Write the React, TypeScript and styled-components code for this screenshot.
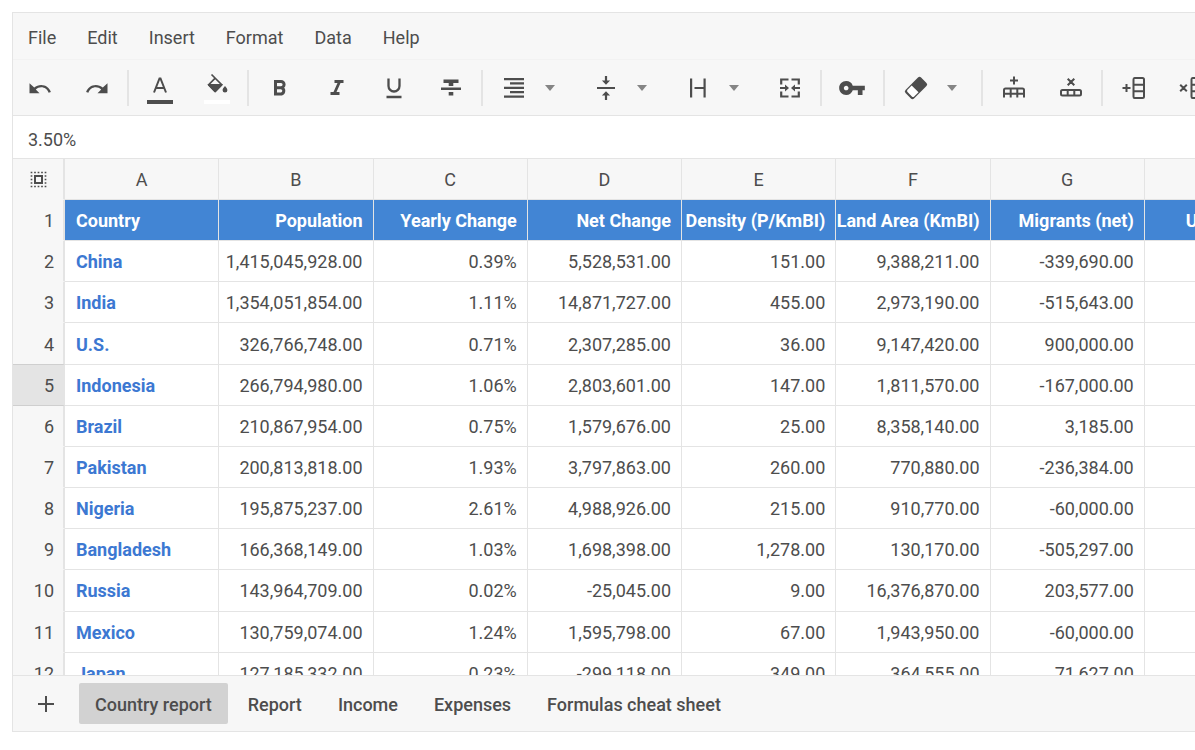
import React from "react";
import styled, { createGlobalStyle } from "styled-components";
import { MdVpnKey } from "react-icons/md";

const colors = {
  text: "#4d4d4d",
  panel: "#f7f7f7",
  line: "#e4e4e4",
  lineSoft: "#f2f2f2",
  active: "#d2d2d2",
  blue: "#4285d4",
  link: "#3c78d2",
};

const GlobalStyle = createGlobalStyle`
  * { box-sizing: border-box; }
  body {
    margin: 0;
    background: #fff;
    color: ${colors.text};
    font-family: Roboto, "Liberation Sans", sans-serif;
    font-size: 18px;
    line-height: 24px;
    overflow: hidden;
  }
  button, input { font: inherit; color: inherit; }
`;

const Page = styled.div`
  display: flex;
  height: 100vh;
  padding: 12px 0 18px 12px;
`;

const Spreadsheet = styled.main`
  flex: 1;
  min-width: 0;
  display: flex;
  flex-direction: column;
  border: 1px solid ${colors.line};
  border-right: 0;
  background: ${colors.panel};
`;

const MenuBar = styled.nav`
  flex: none;
  display: flex;
  gap: 1px;
  height: 47px;
  border-bottom: 1px solid ${colors.lineSoft};
`;

const MenuItem = styled.button`
  border: 0;
  background: none;
  padding: 4px 15px 0;
`;

const Toolbar = styled.div`
  flex: none;
  display: flex;
  align-items: center;
  gap: 4px;
  height: 56px;
  border-bottom: 1px solid ${colors.line};
  overflow: hidden;
`;

const ToolButton = styled.button<{ $menu?: boolean }>`
  flex: none;
  display: flex;
  align-items: center;
  gap: 16px;
  width: ${(p) => (p.$menu ? 88 : 53)}px;
  height: 42px;
  padding: 0 0 0 12px;
  border: 0;
  background: none;
`;

const Separator = styled.span`
  flex: none;
  width: 2px;
  height: 36px;
  background: ${colors.line};
`;

const Glyph = styled.svg`
  flex: none;
  display: block;
`;

const FormulaInput = styled.input`
  flex: none;
  display: block;
  width: 100%;
  height: 43px;
  padding: 4px 15px 0;
  border: 0;
  border-bottom: 1px solid ${colors.line};
  background: #fff;
  outline: 0;
`;

const SheetArea = styled.div`
  flex: 1;
  min-height: 0;
  overflow: hidden;
  background: #fff;
`;

const Sheet = styled.table`
  table-layout: fixed;
  width: 1286px;
  height: 535px;
  border-collapse: separate;
  border-spacing: 0;
`;

const IndexCol = styled.col`
  width: 52px;
`;

const ColumnHead = styled.th`
  height: 41px;
  padding: 2px 0 0;
  background: ${colors.panel};
  border-right: 1px solid ${colors.line};
  border-bottom: 1px solid ${colors.line};
  font-weight: 400;
`;

const Corner = styled(ColumnHead)`
  padding: 0;
  border-right-width: 2px;
  border-bottom-color: ${colors.panel};
`;

const SelectAll = styled.button`
  display: flex;
  align-items: center;
  width: 100%;
  height: 40px;
  padding: 0 0 0 17px;
  border: 0;
  background: none;
`;

const RowHead = styled.th<{ $selected: boolean; $beforeSelected: boolean }>`
  padding: 2px 9px 0 0;
  background: ${(p) => (p.$selected ? "#e4e4e4" : colors.panel)};
  border-right: 2px solid ${colors.line};
  border-bottom: 1px solid ${(p) => (p.$selected || p.$beforeSelected ? "#cfcfcf" : colors.panel)};
  font-weight: 400;
  text-align: right;
`;

const Cell = styled.td<{ $head: boolean; $name: boolean }>`
  padding: 2px 10px 0 11px;
  overflow: hidden;
  border-right: 1px solid ${colors.line};
  border-bottom: 1px solid ${colors.line};
  background: ${(p) => (p.$head ? colors.blue : "#fff")};
  color: ${(p) => (p.$head ? "#fff" : p.$name ? colors.link : colors.text)};
  font-weight: ${(p) => (p.$head || p.$name ? 700 : 400)};
`;

const CellText = styled.div<{ $end: boolean }>`
  display: flex;
  justify-content: ${(p) => (p.$end ? "flex-end" : "flex-start")};
  white-space: nowrap;
`;

const TabBar = styled.div`
  flex: none;
  display: flex;
  align-items: center;
  gap: 4px;
  height: 56px;
  padding-left: 12px;
  border-top: 1px solid ${colors.line};
`;

const AddSheet = styled.button`
  display: grid;
  place-items: center;
  width: 42px;
  height: 42px;
  margin-right: 8px;
  padding: 0;
  border: 0;
  background: none;
`;

const Tab = styled.button<{ $active: boolean }>`
  height: 41px;
  padding: 2px 16px 0;
  border: 0;
  border-radius: 2px;
  background: ${(p) => (p.$active ? colors.active : "transparent")};
  font-weight: 500;
  white-space: nowrap;
`;

const C = colors.text;

const icons: Record<string, React.ReactNode> = {
  undo: <path fill={C} d="M4.500 10.200v10h10l-3.700-3.700c1.700-1.500 3.400-2.200 5.400-2.200 3.500 0 6.300 2.200 7.400 5.400l2.300-.8c-1.400-4.200-5.200-7-9.700-7-2.700 0-5 .9-7 2.700z" />,
  redo: <path fill={C} d="M25.500 10.200v10h-10l3.700-3.700c-1.700-1.500-3.400-2.200-5.400-2.200-3.500 0-6.300 2.200-7.400 5.400l-2.300-.8c1.400-4.200 5.200-7 9.700-7 2.700 0 5 .9 7 2.700z" />,
  color: (
    <>
      <path fill="none" stroke={C} strokeWidth="2" d="M9 19.500 14.500 5.500h1L21 19.500M11 15h8" />
      <path fill={C} d="M2 27h26v4H2z" />
    </>
  ),
  fill: (
    <>
      <path fill="none" stroke={C} strokeWidth="1.700" d="M9.500 1.500 19.700 11.700l-6.500 6.500L6.700 11.700l6.500-6.500" />
      <path fill={C} d="M5.700 11h15l-.6 1.500-6 6.200q-1 1-2 0l-6-6.200zM23 13s2.400 2.500 2.400 4.200a2.400 2.400 0 0 1-4.800 0c0-1.700 2.400-4.200 2.400-4.200z" />
      <path fill="#fff" d="M2 27h26v4H2z" />
    </>
  ),
  bold: <path fill="none" stroke={C} strokeWidth="3" d="M10.500 8.500H16a3 3 0 0 1 0 6.200h-5.500zM10.500 14.700h6a3.300 3.300 0 0 1 0 6.300h-6z" />,
  italic: <path fill={C} d="M12.500 7h9v3h-3l-4 9h3v3h-9v-3h3l4-9h-3z" />,
  underline: <path fill="none" stroke={C} strokeWidth="2.300" d="M9.500 5.500v7.500a5.500 5.500 0 0 0 11 0V5.500M7.500 24h15" />,
  strike: <path fill={C} d="M7.500 6.500h15V10h-5.200v3h-4.600v-3H7.500zM5 14.500h20V17H5zM12.700 19h4.600v3.500h-4.600z" />,
  align: <path fill={C} d="M5 5h20v2.300H5zM11 9.300h14v2.300H11zM5 13.700h20V16H5zM11 18h14v2.300H11zM5 22.500h20v2.300H5z" />,
  middle: <path fill={C} d="M6 14h18v2H6zM13.900 3h2.200v4.500h3L15 11.700l-4.100-4.200h3zM13.900 27h2.200v-4.500h3L15 18.300l-4.100 4.200h3z" />,
  clip: <path fill={C} d="M7 5.500h2.200v19H7zM20.500 5.500h2.200v19h-2.200zM11.500 14h9v2h-9z" />,
  merge: (
    <>
      <path fill="none" stroke={C} strokeWidth="2.200" d="M6.200 11.500v-5h7.300M16.500 6.500h7.300v5M6.200 18.500v5h7.300M16.500 23.500h7.300v-5" />
      <path fill={C} d="M5 14h5v-2.500l4 3.500-4 3.500V16H5zM25 14h-5v-2.500L16 15l4 3.500V16h5z" />
    </>
  ),
  eraser: (
    <>
      <rect x="9" y="4" width="12" height="22" rx="2.200" transform="rotate(45 15 15)" fill={C} />
      <path fill="#fff" d="m10.700 12.500 6.800 6.800-4.300 4.200q-1.200 1-2.300 0l-4.400-4.400q-1-1.200 0-2.400z" />
    </>
  ),
  addRow: <path fill="none" stroke={C} strokeWidth="2" d="M15 3.500v8M11 7.500h8M5 24.500V17q0-1.500 1.500-1.500h17q1.500 0 1.500 1.500v7.500M11.700 15.500v9M18.300 15.500v9M5 20.700h20" />,
  deleteRow: <path fill="none" stroke={C} strokeWidth="2" d="m11.700 5.700 6.600 6.600M18.300 5.700l-6.600 6.600M6.500 17h17q1.500 0 1.500 1.500v2.500q0 1.500-1.500 1.500h-17Q5 22.500 5 21v-2.500Q5 17 6.500 17zM11.700 17v5.500M18.300 17v5.500" />,
  addColumn: <path fill="none" stroke={C} strokeWidth="2" d="M3.500 15h8M7.500 11v8M15.500 5h8q1.500 0 1.500 1.500v17q0 1.500-1.500 1.500h-8q-1 0-1-1.500v-17q0-1.500 1-1.500zM14.500 11.700H25M14.500 18.300H25" />,
  deleteColumn: <path fill="none" stroke={C} strokeWidth="2" d="m4.200 11.700 6.600 6.600M10.800 11.700l-6.600 6.600M16.500 5h8q1.500 0 1.500 1.500v17q0 1.500-1.500 1.500h-8q-1 0-1-1.500v-17q0-1.500 1-1.500zM15.500 11.700H26M15.500 18.300H26" />,
};

type Tool = { id: string; label: string; menu?: boolean };

const toolGroups: Tool[][] = [
  [{ id: "undo", label: "Undo" }, { id: "redo", label: "Redo" }],
  [{ id: "color", label: "Text color" }, { id: "fill", label: "Background color" }],
  [
    { id: "bold", label: "Bold" },
    { id: "italic", label: "Italic" },
    { id: "underline", label: "Underline" },
    { id: "strike", label: "Strikethrough" },
  ],
  [
    { id: "align", label: "Horizontal align", menu: true },
    { id: "middle", label: "Vertical align", menu: true },
    { id: "clip", label: "Multiline", menu: true },
    { id: "merge", label: "Merge" },
  ],
  [{ id: "key", label: "Lock cell" }],
  [{ id: "eraser", label: "Clear", menu: true }],
  [{ id: "addRow", label: "Add row" }, { id: "deleteRow", label: "Remove row" }],
  [{ id: "addColumn", label: "Add column" }, { id: "deleteColumn", label: "Remove column" }],
];

const menuItems = ["File", "Edit", "Insert", "Format", "Data", "Help"];
const tabs = ["Country report", "Report", "Income", "Expenses", "Formulas cheat sheet"];
const columns = ["A", "B", "C", "D", "E", "F", "G", "H"];
const rows = [
  ["Country", "Population", "Yearly Change", "Net Change", "Density (P/KmBI)", "Land Area (KmBI)", "Migrants (net)", "Urban Pop %"],
  ["China", "1,415,045,928.00", "0.39%", "5,528,531.00", "151.00", "9,388,211.00", "-339,690.00", ""],
  ["India", "1,354,051,854.00", "1.11%", "14,871,727.00", "455.00", "2,973,190.00", "-515,643.00", ""],
  ["U.S.", "326,766,748.00", "0.71%", "2,307,285.00", "36.00", "9,147,420.00", "900,000.00", ""],
  ["Indonesia", "266,794,980.00", "1.06%", "2,803,601.00", "147.00", "1,811,570.00", "-167,000.00", ""],
  ["Brazil", "210,867,954.00", "0.75%", "1,579,676.00", "25.00", "8,358,140.00", "3,185.00", ""],
  ["Pakistan", "200,813,818.00", "1.93%", "3,797,863.00", "260.00", "770,880.00", "-236,384.00", ""],
  ["Nigeria", "195,875,237.00", "2.61%", "4,988,926.00", "215.00", "910,770.00", "-60,000.00", ""],
  ["Bangladesh", "166,368,149.00", "1.03%", "1,698,398.00", "1,278.00", "130,170.00", "-505,297.00", ""],
  ["Russia", "143,964,709.00", "0.02%", "-25,045.00", "9.00", "16,376,870.00", "203,577.00", ""],
  ["Mexico", "130,759,074.00", "1.24%", "1,595,798.00", "67.00", "1,943,950.00", "-60,000.00", ""],
  ["Japan", "127,185,332.00", "0.23%", "-299,118.00", "349.00", "364,555.00", "71,627.00", ""],
];

const selectedRow = 5;

function ToolIcon({ id }: { id: string }) {
  if (id === "key") return <MdVpnKey size={28} color={C} />;
  return (
    <Glyph width="30" height="34" viewBox="0 -2 30 34" aria-hidden="true">
      {icons[id]}
    </Glyph>
  );
}

export default function App() {
  return (
    <Page>
      <GlobalStyle />
      <Spreadsheet>
        <MenuBar>
          {menuItems.map((item) => (
            <MenuItem key={item}>{item}</MenuItem>
          ))}
        </MenuBar>
        <Toolbar role="toolbar" aria-label="Formatting">
          {toolGroups.map((group, index) => (
            <React.Fragment key={group[0].id}>
              {index > 0 && <Separator />}
              {group.map((tool) => (
                <ToolButton key={tool.id} aria-label={tool.label} $menu={tool.menu}>
                  <ToolIcon id={tool.id} />
                  {tool.menu && (
                    <Glyph width="10" height="6" viewBox="0 0 10 6" aria-hidden="true">
                      <path fill="#858585" d="M0 0h10L5 6z" />
                    </Glyph>
                  )}
                </ToolButton>
              ))}
            </React.Fragment>
          ))}
        </Toolbar>
        <FormulaInput aria-label="Cell value" defaultValue="3.50%" />
        <SheetArea>
          <Sheet>
            <colgroup>
              <IndexCol />
              {columns.map((column) => (
                <col key={column} />
              ))}
            </colgroup>
            <thead>
              <tr>
                <Corner>
                  <SelectAll aria-label="Select all cells">
                    <Glyph width="17" height="17" viewBox="0 0 17 17" aria-hidden="true">
                      <rect x="5" y="5" width="7" height="7" fill="none" stroke={C} strokeWidth="2" />
                      <path
                        fill="none"
                        stroke={C}
                        strokeWidth="1.700"
                        strokeDasharray="1.700 1.800"
                        d="M.650 1.500h15.700M.650 15.500h15.700M1.500 .650v15.700M15.500 .650v15.700"
                      />
                    </Glyph>
                  </SelectAll>
                </Corner>
                {columns.map((column) => (
                  <ColumnHead key={column} scope="col">
                    {column}
                  </ColumnHead>
                ))}
              </tr>
            </thead>
            <tbody>
              {rows.map((row, r) => (
                <tr key={row[0]}>
                  <RowHead scope="row" $selected={r + 1 === selectedRow} $beforeSelected={r + 2 === selectedRow}>
                    {r + 1}
                  </RowHead>
                  {row.map((value, c) => (
                    <Cell key={columns[c]} $head={r === 0} $name={c === 0}>
                      <CellText $end={c > 0}>{value}</CellText>
                    </Cell>
                  ))}
                </tr>
              ))}
            </tbody>
          </Sheet>
        </SheetArea>
        <TabBar>
          <AddSheet aria-label="Add sheet">
            <Glyph width="16" height="16" viewBox="0 0 16 16" aria-hidden="true">
              <path fill="none" stroke={C} strokeWidth="2" d="M8 0v16M0 8h16" />
            </Glyph>
          </AddSheet>
          {tabs.map((tab, index) => (
            <Tab key={tab} $active={index === 0}>
              {tab}
            </Tab>
          ))}
        </TabBar>
      </Spreadsheet>
    </Page>
  );
}
